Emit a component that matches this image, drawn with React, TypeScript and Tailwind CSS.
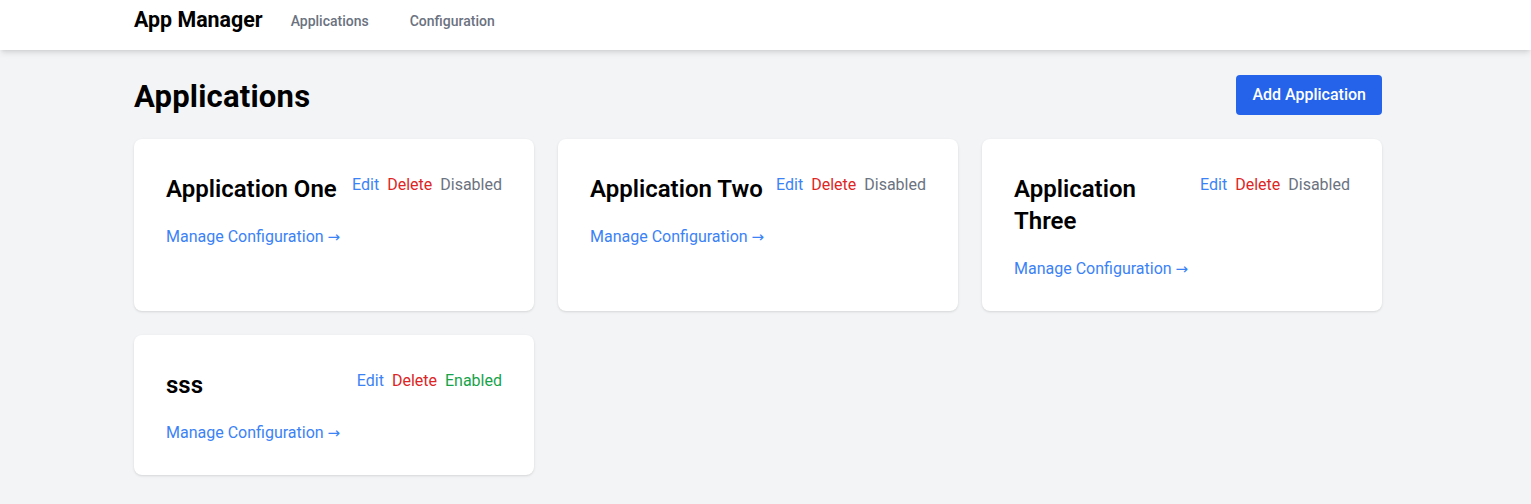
import React from "react";

type AppItem = { name: string; enabled: boolean };

const apps: AppItem[] = [
  { name: "Application One", enabled: false },
  { name: "Application Two", enabled: false },
  { name: "Application Three", enabled: false },
  { name: "sss", enabled: true },
];

function Card({ app }: { app: AppItem }) {
  return (
    <div className="rounded-lg bg-white px-8 pt-[34px] pb-[30px] shadow">
      <div className="flex items-start justify-between">
        <h2 className="text-2xl leading-8 font-semibold text-black">{app.name}</h2>
        <div className="flex shrink-0 gap-2 whitespace-nowrap text-base leading-6">
          <button className="text-[#3b82f6]">Edit</button>
          <button className="text-[#dc2626]">Delete</button>
          {app.enabled ? (
            <span className="text-[#16a34a]">Enabled</span>
          ) : (
            <span className="text-[#6b7280]">Disabled</span>
          )}
        </div>
      </div>
      <a className="mt-5 block text-base leading-6 text-[#3b82f6]">
        Manage Configuration <span className="font-['DejaVu_Sans',sans-serif] text-[15px]">→</span>
      </a>
    </div>
  );
}

export default function App() {
  return (
    <div className="min-h-screen w-[1531px] bg-[#f3f4f6] font-['Roboto',sans-serif]">
      <header className="h-[50px] bg-white shadow-md">
        <div className="w-[1516px]">
          <div className="mx-auto flex h-[41px] max-w-7xl items-center px-4">
            <span className="text-[21.4px] font-bold text-black">App Manager</span>
            <nav className="ml-4 flex gap-[17px]">
              <a className="px-3 py-2 text-sm font-medium text-[#6b7280]">Applications</a>
              <a className="px-3 py-2 text-sm font-medium text-[#6b7280]">Configuration</a>
            </nav>
          </div>
        </div>
      </header>
      <div className="w-[1516px]">
        <main className="mx-auto max-w-7xl px-4 pt-[25px] pb-6">
          <div className="flex items-end justify-between">
            <h1 className="text-[31px] leading-9 font-bold tracking-[0.2px] text-black">Applications</h1>
            <button className="rounded bg-[#2563eb] px-4 py-2 text-base leading-6 font-medium text-white">
              Add Application
            </button>
          </div>
          <div className="mt-6 grid grid-cols-3 gap-6">
            {apps.map((a) => (
              <Card key={a.name} app={a} />
            ))}
          </div>
        </main>
      </div>
    </div>
  );
}
